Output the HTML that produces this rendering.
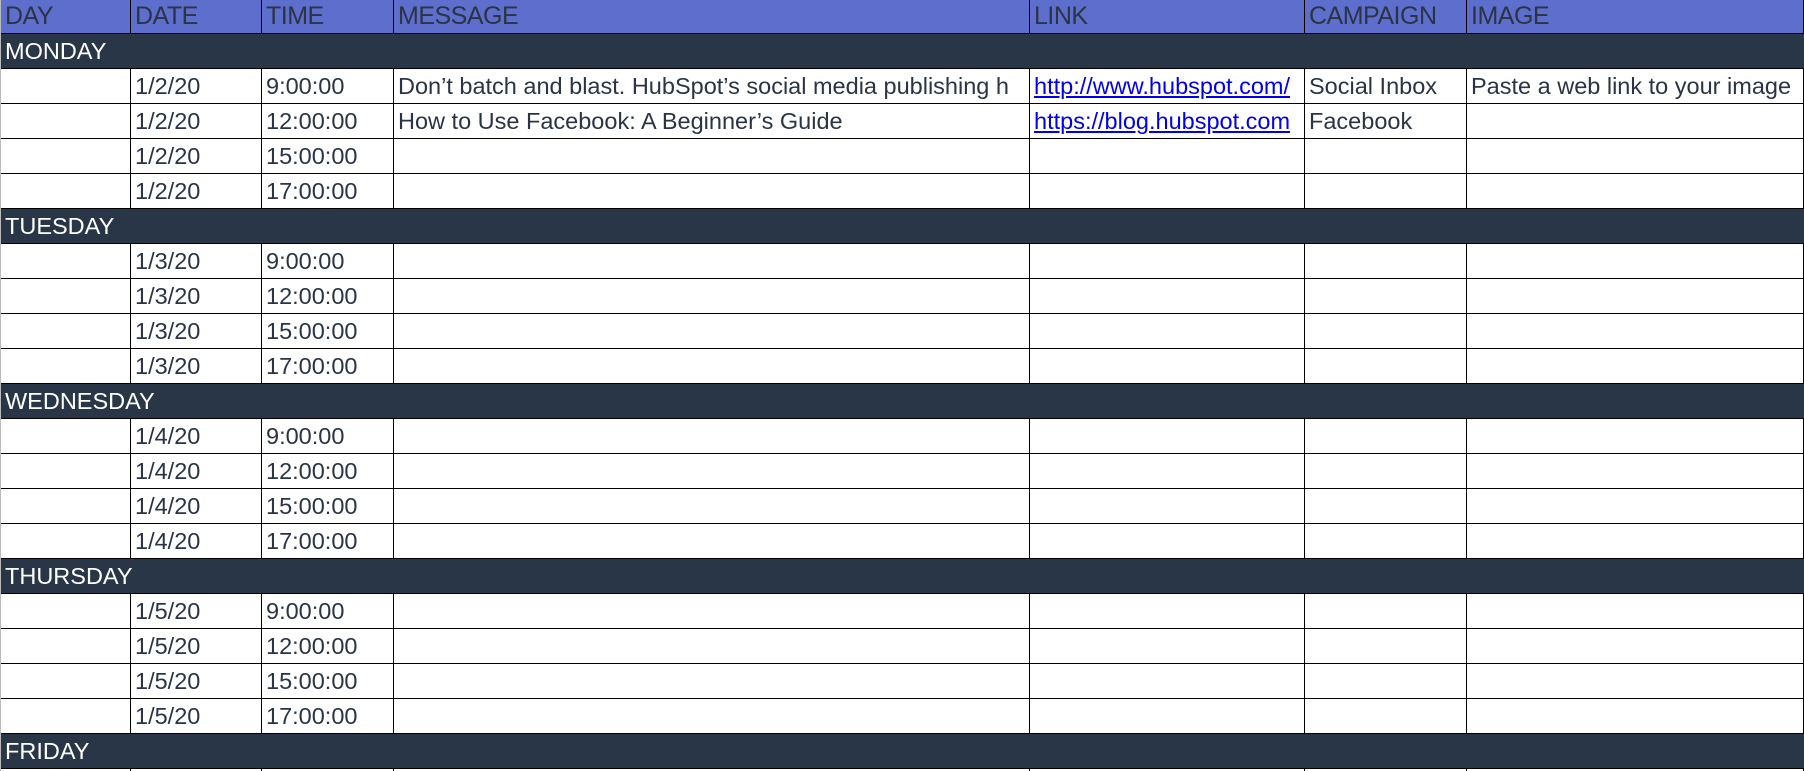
<!DOCTYPE html>
<html><head><meta charset="utf-8"><style>
html,body{margin:0;padding:0;background:#fff;width:1804px;height:771px;overflow:hidden}
body{border-left:1px solid #bbb;box-sizing:border-box}
table{border-collapse:separate;border-spacing:0;table-layout:fixed;width:1803px;font-family:"Liberation Sans",sans-serif;color:#2a3445}
td{box-sizing:border-box;height:35px;border-right:1px solid #000;border-bottom:1px solid #000;padding:0 0 0 4px;white-space:nowrap;overflow:hidden;font-size:23.5px;line-height:34px;vertical-align:middle}
tr.h td{background:#5d6ecd;height:34px;font-size:25px;letter-spacing:-0.5px;line-height:33px}
tr.d td{background:#293647;color:#fff;border-right:none;font-size:23.5px}
a{color:#0000ee;text-decoration:underline}
</style></head><body>
<table>
<colgroup><col style="width:130px"><col style="width:131px"><col style="width:132px"><col style="width:636px"><col style="width:275px"><col style="width:162px"><col style="width:337px"></colgroup>
<tr class="h"><td>DAY</td><td>DATE</td><td>TIME</td><td>MESSAGE</td><td>LINK</td><td>CAMPAIGN</td><td>IMAGE</td></tr>
<tr class="d"><td colspan="7">MONDAY</td></tr>
<tr><td></td><td>1/2/20</td><td>9:00:00</td><td>Don’t batch and blast. HubSpot’s social media publishing h</td><td><a>http://www.hubspot.com/</a></td><td>Social Inbox</td><td>Paste a web link to your image</td></tr>
<tr><td></td><td>1/2/20</td><td>12:00:00</td><td>How to Use Facebook: A Beginner’s Guide</td><td><a>https://blog.hubspot.com</a></td><td>Facebook</td><td></td></tr>
<tr><td></td><td>1/2/20</td><td>15:00:00</td><td></td><td></td><td></td><td></td></tr>
<tr><td></td><td>1/2/20</td><td>17:00:00</td><td></td><td></td><td></td><td></td></tr>
<tr class="d"><td colspan="7">TUESDAY</td></tr>
<tr><td></td><td>1/3/20</td><td>9:00:00</td><td></td><td></td><td></td><td></td></tr>
<tr><td></td><td>1/3/20</td><td>12:00:00</td><td></td><td></td><td></td><td></td></tr>
<tr><td></td><td>1/3/20</td><td>15:00:00</td><td></td><td></td><td></td><td></td></tr>
<tr><td></td><td>1/3/20</td><td>17:00:00</td><td></td><td></td><td></td><td></td></tr>
<tr class="d"><td colspan="7">WEDNESDAY</td></tr>
<tr><td></td><td>1/4/20</td><td>9:00:00</td><td></td><td></td><td></td><td></td></tr>
<tr><td></td><td>1/4/20</td><td>12:00:00</td><td></td><td></td><td></td><td></td></tr>
<tr><td></td><td>1/4/20</td><td>15:00:00</td><td></td><td></td><td></td><td></td></tr>
<tr><td></td><td>1/4/20</td><td>17:00:00</td><td></td><td></td><td></td><td></td></tr>
<tr class="d"><td colspan="7">THURSDAY</td></tr>
<tr><td></td><td>1/5/20</td><td>9:00:00</td><td></td><td></td><td></td><td></td></tr>
<tr><td></td><td>1/5/20</td><td>12:00:00</td><td></td><td></td><td></td><td></td></tr>
<tr><td></td><td>1/5/20</td><td>15:00:00</td><td></td><td></td><td></td><td></td></tr>
<tr><td></td><td>1/5/20</td><td>17:00:00</td><td></td><td></td><td></td><td></td></tr>
<tr class="d"><td colspan="7">FRIDAY</td></tr>
<tr><td></td><td></td><td></td><td></td><td></td><td></td><td></td></tr>
</table>
</body></html>
